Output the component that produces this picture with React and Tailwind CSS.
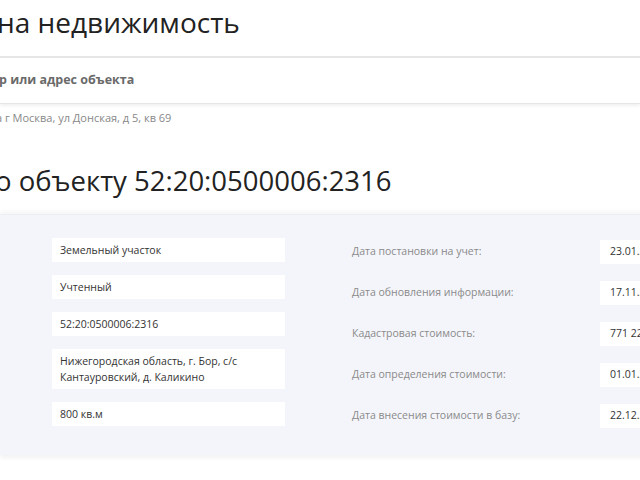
import React from "react";

const leftRows = [
  "Земельный участок",
  "Учтенный",
  "52:20:0500006:2316",
  "Нижегородская область, г. Бор, с/с Кантауровский, д. Каликино",
  "800 кв.м",
];

const rightRows = [
  { label: "Дата постановки на учет:", value: "23.01.2015" },
  { label: "Дата обновления информации:", value: "17.11.2016" },
  { label: "Кадастровая стоимость:", value: "771 224 руб." },
  { label: "Дата определения стоимости:", value: "01.01.2014" },
  { label: "Дата внесения стоимости в базу:", value: "22.12.2014" },
];

export default function App() {
  return (
    <div
      className="w-[640px] h-[480px] overflow-hidden bg-white text-[#222]"
      style={{ fontFamily: '"Open Sans", "Noto Sans", sans-serif' }}
    >
      <h1 className="ml-[-3px] pt-[2px] h-[56px] text-[28px] leading-[40px] whitespace-nowrap">
        на недвижимость
      </h1>

      <div className="h-[48px] border-t-2 border-b border-[#e6e6e6] shadow-[0_2px_3px_rgba(0,0,0,0.06)] flex items-center">
        <span className="ml-[-1px] text-[12.5px] font-bold text-[#6a6a6a] whitespace-nowrap">
          р или адрес объекта
        </span>
      </div>

      <div className="ml-[-4px] pt-[6px] h-[55px] text-[11px] text-[#888] whitespace-nowrap">
        а г Москва, ул Донская, д 5, кв 69
      </div>

      <h2 className="ml-[-5px] h-[55px] text-[27.5px] leading-[44px] whitespace-nowrap">
        о объекту 52:20:0500006:2316
      </h2>

      <div className="w-[700px] h-[241px] bg-[#f4f5fa] shadow-[0_-3px_4px_rgba(0,0,0,0.04),0_3px_4px_rgba(0,0,0,0.05)] border-t border-[#eceef4] pt-[23px] flex">
        <div className="ml-[52px] w-[233px] flex flex-col gap-[13px]">
          {leftRows.map((row) => (
            <div
              key={row}
              className="bg-white min-h-[24px] px-[8px] py-[4px] text-[10.5px] leading-[16px] text-[#333]"
            >
              {row}
            </div>
          ))}
        </div>

        <div className="ml-[67px] pt-[2px] flex flex-col gap-[17px]">
          {rightRows.map((row) => (
            <div key={row.label} className="flex items-center h-[24px]">
              <span className="w-[248px] text-[10.5px] text-[#8a8a8a] whitespace-nowrap">
                {row.label}
              </span>
              <span className="bg-white h-[24px] w-[100px] pl-[10px] flex items-center text-[10.5px] text-[#333] whitespace-nowrap">
                {row.value}
              </span>
            </div>
          ))}
        </div>
      </div>
    </div>
  );
}
